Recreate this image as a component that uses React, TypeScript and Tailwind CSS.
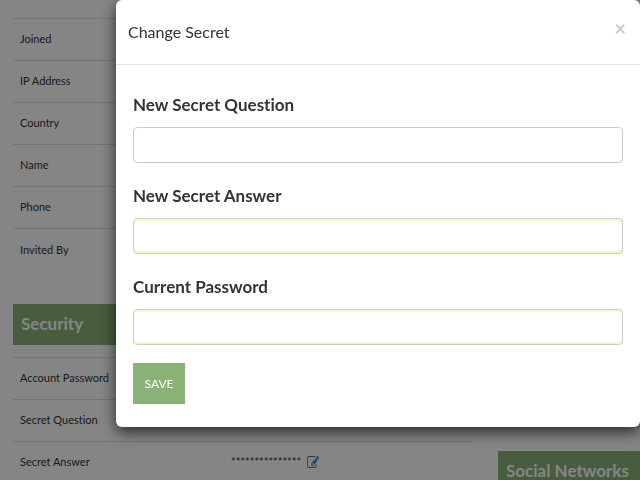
const details = ['Joined', 'IP Address', 'Country', 'Name', 'Phone', 'Invited By']

const security = [
  { label: 'Account Password', value: '' },
  { label: 'Secret Question', value: '' },
  { label: 'Secret Answer', value: '***************' },
]

const fields = [
  { id: 'question', label: 'New Secret Question', type: 'text', filled: false },
  { id: 'answer', label: 'New Secret Answer', type: 'text', filled: true },
  { id: 'password', label: 'Current Password', type: 'password', filled: true },
]

function EditIcon() {
  return (
    <svg viewBox="0 128 1792 1408" preserveAspectRatio="none" className="h-3 w-3" fill="currentColor" aria-hidden="true">
      <path d="M888 1184l116-116-152-152-116 116v56h96v96h56zm440-720q-16-16-33 1l-350 350q-17 17-1 33t33-1l350-350q17-17 1-33zm80 594v190q0 119-84.5 203.5t-203.5 84.5h-832q-119 0-203.5-84.5t-84.5-203.5v-832q0-119 84.5-203.5t203.5-84.5h832q63 0 117 25 15 7 18 23 3 17-9 29l-49 49q-14 14-32 8-23-6-45-6h-832q-66 0-113 47t-47 113v832q0 66 47 113t113 47h832q66 0 113-47t47-113v-126q0-13 9-22l64-64q15-15 35-7t20 29zm-96-738l288 288-672 672h-288v-288zm444 132l-92 92-288-288 92-92q28-28 68-28t68 28l152 152q28 28 28 68t-28 68z" />
    </svg>
  )
}

function Row({ label, value }: { label: string; value?: string }) {
  return (
    <tr className="h-[42px] border-t border-[#dddddd]">
      <th scope="row" className="w-[218px] pl-[7px] text-left font-normal">{label}</th>
      <td>
        {value && (
          <div className="flex items-center gap-1.5">
            <span>{value}</span>
            <button aria-label={`Edit ${label}`} className="text-[#3d78ad]"><EditIcon /></button>
          </div>
        )}
      </td>
    </tr>
  )
}

function ChangeSecret() {
  return (
    <div role="dialog" aria-labelledby="title" className="ml-[116px] w-full rounded-md bg-white shadow-[0_5px_15px_rgba(0,0,0,0.7)]">
      <div className="flex h-[65px] items-center justify-between border-b border-[#e5e5e5] pl-3 pr-3.5">
        <h4 id="title" className="text-[16px]">Change Secret</h4>
        <button aria-label="Close" className="pb-2 text-[20px] leading-5 font-bold text-[#cccccc]">×</button>
      </div>
      <form className="px-[17px] pt-[26px] pb-[23px]" onSubmit={(e) => e.preventDefault()}>
        <div className="flex flex-col gap-[19px]">
          {fields.map((f) => (
            <div key={f.id}>
              <label htmlFor={f.id} className="mb-2 block text-[17px] leading-7 font-bold">{f.label}</label>
              <input
                id={f.id}
                type={f.type}
                className={
                  f.filled
                    ? 'block h-9 w-full rounded border border-[#cccccc] px-3 shadow-[inset_0_2px_1px_#f4fbc8,inset_0_-2px_1px_#f0f9b8] outline-none'
                    : 'block h-9 w-full rounded border border-[#cccccc] px-3 outline-none'
                }
              />
            </div>
          ))}
        </div>
        <button className="mt-[18px] h-[41px] w-[52px] bg-[#88b277] text-[12px] text-white">SAVE</button>
      </form>
    </div>
  )
}

export default function App() {
  return (
    <div className="h-screen overflow-hidden bg-white font-['Lato',sans-serif] text-[#333333] [font-variant-ligatures:none]">
      <div className="flex gap-[26px] pl-[13px] text-[11px]">
        <div className="min-w-0 flex-1 pt-[18px]">
          <table className="w-full border-collapse">
            <tbody>
              {details.map((label) => <Row key={label} label={label} />)}
            </tbody>
          </table>
          <h3 className="mt-[33px] mb-3 h-[41px] bg-[#88b277] pl-2 text-[17px] leading-10 font-bold text-white">Security</h3>
          <table className="w-full border-collapse">
            <tbody>
              {security.map((r) => <Row key={r.label} label={r.label} value={r.value} />)}
            </tbody>
          </table>
        </div>
        <div className="w-[142px] pt-[451px]">
          <h3 className="h-[41px] bg-[#88b277] pl-2 text-[17px] leading-10 font-bold whitespace-nowrap text-white">Social Networks</h3>
        </div>
      </div>
      <div className="fixed inset-0 flex items-start bg-black/48">
        <ChangeSecret />
      </div>
    </div>
  )
}
